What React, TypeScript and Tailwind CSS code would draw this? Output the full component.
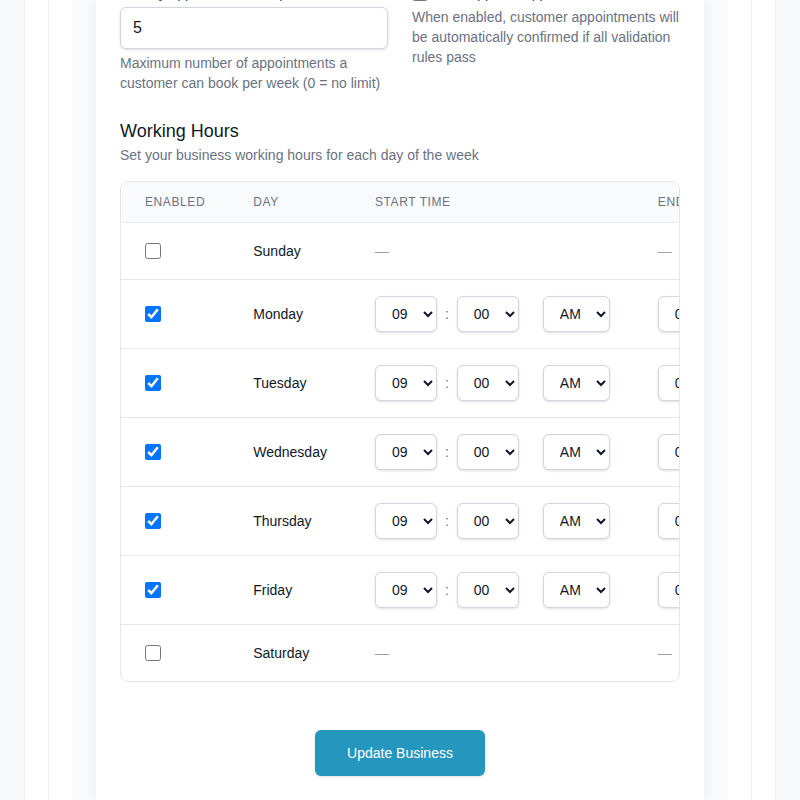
import React from "react";

const hours = ["01","02","03","04","05","06","07","08","09","10","11","12"];
const minutes = ["00","15","30","45"];

type Day = { name: string; enabled: boolean; start: [string, string, string]; end: [string, string, string] };

const days: Day[] = [
  { name: "Sunday", enabled: false, start: ["09", "00", "AM"], end: ["05", "00", "PM"] },
  { name: "Monday", enabled: true, start: ["09", "00", "AM"], end: ["05", "00", "PM"] },
  { name: "Tuesday", enabled: true, start: ["09", "00", "AM"], end: ["05", "00", "PM"] },
  { name: "Wednesday", enabled: true, start: ["09", "00", "AM"], end: ["05", "00", "PM"] },
  { name: "Thursday", enabled: true, start: ["09", "00", "AM"], end: ["05", "00", "PM"] },
  { name: "Friday", enabled: true, start: ["09", "00", "AM"], end: ["05", "00", "PM"] },
  { name: "Saturday", enabled: false, start: ["09", "00", "AM"], end: ["05", "00", "PM"] },
];

const selectCls =
  "border border-gray-300 rounded-md shadow-sm bg-white text-sm text-gray-900 px-3 py-2 h-9";

function TimePicker({ value }: { value: [string, string, string] }) {
  return (
    <div className="flex items-center gap-2">
      <select defaultValue={value[0]} className={selectCls + " w-[62px]"}>
        {hours.map((h) => (
          <option key={h} value={h}>{h}</option>
        ))}
      </select>
      <span className="text-gray-500 text-sm">:</span>
      <select defaultValue={value[1]} className={selectCls + " w-[62px]"}>
        {minutes.map((m) => (
          <option key={m} value={m}>{m}</option>
        ))}
      </select>
      <select defaultValue={value[2]} className={selectCls + " w-[67px] ml-4"}>
        <option value="AM">AM</option>
        <option value="PM">PM</option>
      </select>
    </div>
  );
}

export default function App() {
  return (
    <div
      className="h-[800px] overflow-hidden bg-[#f8f9fb] px-6"
      style={{ fontFamily: '"Liberation Sans", Arial, sans-serif' }}
    >
      <div className="h-full bg-white border-x border-[#eceef1] px-[23px]">
        <div className="h-full bg-white border-x border-[#f1f2f4] px-[23px]">
          <div className="h-full bg-[#f9fafb] px-6">
            <div className="h-full bg-white shadow-[0_0_16px_rgba(0,0,0,0.06)] overflow-hidden">
              <div className="px-6 -mt-[17px]">
                <div className="grid grid-cols-2 gap-6">
                  <div>
                    <label className="block text-sm font-medium text-gray-700 mb-1">
                      Weekly appointment limit per customer
                    </label>
                    <input
                      type="number"
                      defaultValue={5}
                      className="block w-full border border-gray-300 rounded-md shadow-sm px-3 py-2 text-base text-gray-900 bg-white"
                    />
                    <p className="mt-1 text-sm text-gray-500">
                      Maximum number of appointments a customer can book per week (0 = no limit)
                    </p>
                  </div>
                  <div>
                    <label className="flex items-center gap-2 text-sm font-medium text-gray-700 mb-1">
                      <input type="checkbox" className="w-4 h-4" />
                      <span>Auto-approve appointments</span>
                    </label>
                    <p className="text-sm text-gray-500">
                      When enabled, customer appointments will be automatically confirmed if all validation rules pass
                    </p>
                  </div>
                </div>

                <div className="mt-6">
                  <h3 className="text-lg text-gray-900">Working Hours</h3>
                  <p className="text-sm text-gray-500">
                    Set your business working hours for each day of the week
                  </p>
                  <div className="mt-4 border border-gray-200 rounded-lg overflow-hidden">
                    <table className="min-w-full whitespace-nowrap">
                      <thead className="bg-gray-50">
                        <tr>
                          <th className="px-6 py-3 text-left text-xs font-normal text-gray-500 uppercase tracking-wider">Enabled</th>
                          <th className="px-6 py-3 text-left text-xs font-normal text-gray-500 uppercase tracking-wider">Day</th>
                          <th className="px-6 py-3 text-left text-xs font-normal text-gray-500 uppercase tracking-wider">Start Time</th>
                          <th className="px-6 py-3 text-left text-xs font-normal text-gray-500 uppercase tracking-wider">End Time</th>
                        </tr>
                      </thead>
                      <tbody className="divide-y divide-gray-200 border-t border-gray-200">
                        {days.map((d) => (
                          <tr key={d.name} className="h-14">
                            <td className="px-6 py-4 align-middle">
                              <input type="checkbox" defaultChecked={d.enabled} className="w-4 h-4 block" />
                            </td>
                            <td className="px-6 py-4 text-sm text-gray-900 align-middle">{d.name}</td>
                            <td className="px-6 py-4 align-middle">
                              {d.enabled ? (
                                <TimePicker value={d.start} />
                              ) : (
                                <span className="text-sm text-gray-400">—</span>
                              )}
                            </td>
                            <td className="px-6 py-4 align-middle">
                              {d.enabled ? (
                                <TimePicker value={d.end} />
                              ) : (
                                <span className="text-sm text-gray-400">—</span>
                              )}
                            </td>
                          </tr>
                        ))}
                      </tbody>
                    </table>
                  </div>
                </div>

                <div className="mt-12 flex justify-center">
                  <button className="bg-[#2596be] text-white text-sm rounded-md px-8 py-[13px] shadow-sm">
                    Update Business
                  </button>
                </div>
              </div>
            </div>
          </div>
        </div>
      </div>
    </div>
  );
}
